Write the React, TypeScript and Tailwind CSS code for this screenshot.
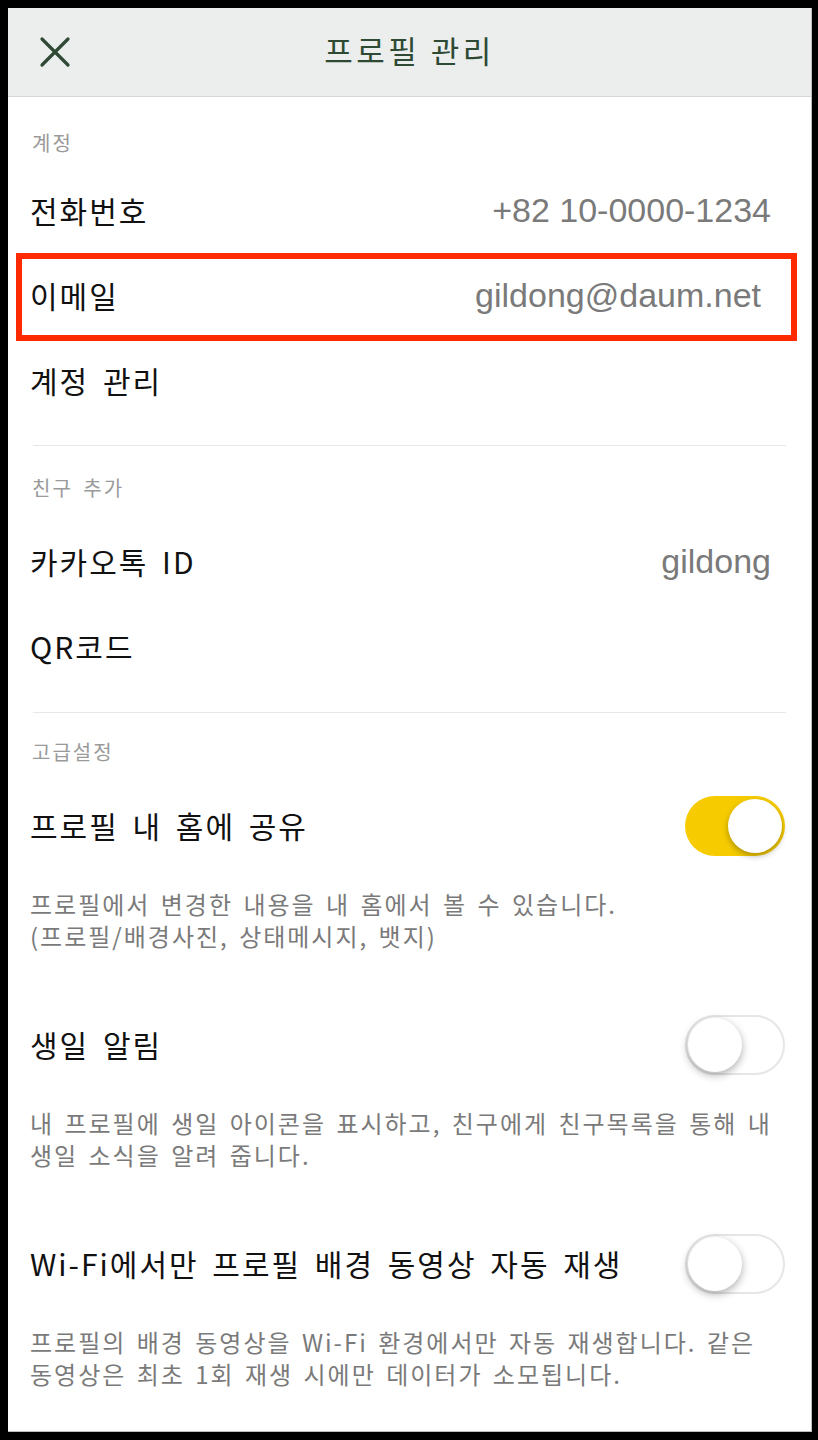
import { ReactNode } from 'react'

const kr = { fontFamily: '"Noto Sans CJK KR", "Noto Sans", sans-serif' }
const latin = { fontFamily: '"Liberation Sans", Arial, sans-serif' }

function SectionLabel({ children, className = '' }: { children: ReactNode; className?: string }) {
  return (
    <div className={`pl-[24px] h-[28px] flex items-center text-[20px] tracking-[2px] [word-spacing:4px] text-[#9a9a9a] ${className}`}>
      {children}
    </div>
  )
}

function Row({ label, value, boxed }: { label: string; value?: string; boxed?: boolean }) {
  return (
    <div className="relative h-[85px] flex items-center justify-between pl-[22px] pr-[40px]">
      <span className="text-[30px] tracking-[2px] [word-spacing:5px] text-[#111]">{label}</span>
      {value && (
        <span style={latin} className={`text-[34px] text-[#7a7a7a] ${boxed ? 'pr-[10px]' : ''}`}>
          {value}
        </span>
      )}
      {boxed && (
        <div className="absolute left-[8px] right-[14px] top-0 -bottom-[3px] border-[6px] border-[#ff2a00]" />
      )}
    </div>
  )
}

function Toggle({ on }: { on: boolean }) {
  return on ? (
    <div className="w-[100px] h-[60px] rounded-full bg-[#f6cc00] flex items-center justify-end pr-[3px]">
      <div className="w-[54px] h-[54px] rounded-full bg-white shadow-[0_3px_6px_rgba(0,0,0,0.3)]" />
    </div>
  ) : (
    <div className="w-[100px] h-[60px] rounded-full bg-white border-2 border-[#e6e6e6] flex items-center pl-[1px]">
      <div className="w-[54px] h-[54px] rounded-full bg-white shadow-[0_3px_8px_rgba(0,0,0,0.32)]" />
    </div>
  )
}

function ToggleItem({ label, on, desc }: { label: string; on: boolean; desc: string[] }) {
  return (
    <div className="pb-[50px]">
      <div className="h-[85px] flex items-center justify-between pl-[22px] pr-[26px]">
        <span className="text-[30px] tracking-[2px] [word-spacing:5px] text-[#111]">{label}</span>
        <Toggle on={on} />
      </div>
      <div className="mt-[20px] pl-[22px] pr-[26px] text-[24px] leading-[32px] tracking-[2px] [word-spacing:3px] text-[#7a7a7a]">
        {desc.map((line) => (
          <div key={line} className="whitespace-nowrap">{line}</div>
        ))}
      </div>
    </div>
  )
}

export default function App() {
  return (
    <div style={kr} className="w-[818px] h-[1440px] bg-black pt-[8px] pl-[8px] pr-[6px] pb-[8px]">
      <div className="h-full bg-white border-r border-b border-[#bdbdbd] overflow-hidden">
        {/* Header */}
        <header className="relative h-[89px] bg-[#eceeed] border-b border-[#d6d8d7] flex items-center justify-center">
          <svg className="absolute left-[31px] top-[28px]" width="32" height="32" viewBox="0 0 32 32">
            <path d="M3 3 L29 29 M29 3 L3 29" stroke="#2e4a34" strokeWidth="3.2" strokeLinecap="round" />
          </svg>
          <h1 className="text-[31px] text-[#2e4a34] tracking-[3.5px] -mt-[4px]">프로필 관리</h1>
        </header>

        {/* 계정 */}
        <section>
          <SectionLabel className="mt-[32px] mb-[11px]">계정</SectionLabel>
          <Row label="전화번호" value="+82 10-0000-1234" />
          <Row label="이메일" value="gildong@daum.net" boxed />
          <Row label="계정 관리" />
        </section>
        <div className="mt-[22px] mx-[25px] border-t border-[#e8e8e8]" />

        {/* 친구 추가 */}
        <section>
          <SectionLabel className="mt-[28px] mb-[17px]">친구 추가</SectionLabel>
          <Row label="카카오톡 ID" value="gildong" />
          <Row label="QR코드" />
        </section>
        <div className="mt-[23px] mx-[25px] border-t border-[#e8e8e8]" />

        {/* 고급설정 */}
        <section>
          <SectionLabel className="mt-[25px] mb-[17px]">고급설정</SectionLabel>
          <ToggleItem
            label="프로필 내 홈에 공유"
            on
            desc={['프로필에서 변경한 내용을 내 홈에서 볼 수 있습니다.', '(프로필/배경사진, 상태메시지, 뱃지)']}
          />
          <ToggleItem
            label="생일 알림"
            on={false}
            desc={['내 프로필에 생일 아이콘을 표시하고, 친구에게 친구목록을 통해 내', '생일 소식을 알려 줍니다.']}
          />
          <ToggleItem
            label="Wi-Fi에서만 프로필 배경 동영상 자동 재생"
            on={false}
            desc={['프로필의 배경 동영상을 Wi-Fi 환경에서만 자동 재생합니다. 같은', '동영상은 최초 1회 재생 시에만 데이터가 소모됩니다.']}
          />
        </section>
      </div>
    </div>
  )
}
